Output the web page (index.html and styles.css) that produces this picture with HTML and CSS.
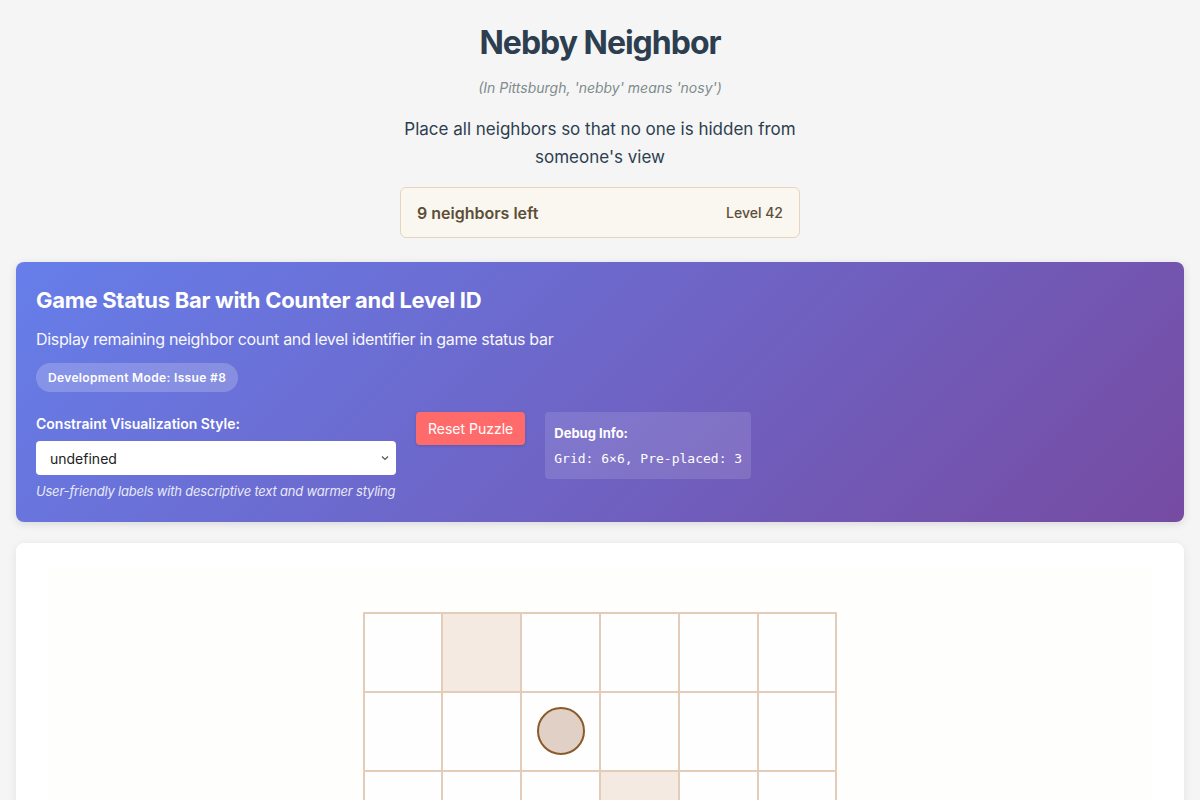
FILE: index.html
```html
<!DOCTYPE html>
<html lang="en">
<head>
<meta charset="utf-8">
<title>Nebby Neighbor</title>
<link rel="stylesheet" href="styles.css">
</head>
<body>
<div class="page">
  <header class="header">
    <h1 class="title">Nebby Neighbor</h1>
    <p class="subtitle">(In Pittsburgh, 'nebby' means 'nosy')</p>
    <p class="intro">Place all neighbors so that no one is hidden from someone's view</p>
    <div class="status">
      <span class="status-count">9 neighbors left</span>
      <span class="status-level">Level 42</span>
    </div>
  </header>

  <section class="dev-panel">
    <h2 class="dev-title">Game Status Bar with Counter and Level ID</h2>
    <p class="dev-desc">Display remaining neighbor count and level identifier in game status bar</p>
    <span class="dev-badge">Development Mode: Issue #8</span>
    <div class="dev-controls">
      <div class="control">
        <label class="control-label">Constraint Visualization Style:</label>
        <div class="select">
          <span>undefined</span>
          <svg class="chev" width="10" height="10" viewBox="0 0 10 10"><path d="M2 3.5 L5 6.5 L8 3.5" fill="none" stroke="#555" stroke-width="1.2"/></svg>
        </div>
        <p class="control-hint">User-friendly labels with descriptive text and warmer styling</p>
      </div>
      <button class="reset">Reset Puzzle</button>
      <div class="debug">
        <div class="debug-title">Debug Info:</div>
        <div class="debug-text">Grid: 6×6, Pre-placed: 3</div>
      </div>
    </div>
  </section>

  <section class="board-card">
    <div class="board-area">
      <div class="grid">
        <div class="cell"></div><div class="cell shaded"></div><div class="cell"></div><div class="cell"></div><div class="cell"></div><div class="cell"></div>
        <div class="cell"></div><div class="cell"></div><div class="cell"><span class="neighbor"></span></div><div class="cell"></div><div class="cell"></div><div class="cell"></div>
        <div class="cell"></div><div class="cell"></div><div class="cell"></div><div class="cell shaded"></div><div class="cell"></div><div class="cell"></div>
        <div class="cell"></div><div class="cell"></div><div class="cell"></div><div class="cell"></div><div class="cell"></div><div class="cell"></div>
        <div class="cell"></div><div class="cell"></div><div class="cell"></div><div class="cell"></div><div class="cell"></div><div class="cell"></div>
        <div class="cell"></div><div class="cell"></div><div class="cell"></div><div class="cell"></div><div class="cell"></div><div class="cell"></div>
      </div>
    </div>
  </section>
</div>
</body>
</html>
```

FILE: styles.css
```css
* { box-sizing: border-box; }

body {
  margin: 0;
  background: #f5f5f5;
  font-family: Inter, "Noto Sans", "Liberation Sans", sans-serif;
  color: #2c3e50;
}

.page {
  padding: 24px 16px 40px;
}

.header {
  display: flex;
  flex-direction: column;
  align-items: center;
  text-align: center;
}

.title {
  margin: 0;
  font-size: 32px;
  line-height: 38px;
  font-weight: 700;
  letter-spacing: -1px;
  color: #2c3e50;
}

.subtitle {
  margin: 17px 0 0;
  font-size: 14px;
  line-height: 18px;
  font-style: italic;
  color: #7f8c8d;
}

.intro {
  margin: 18px 0 0;
  max-width: 400px;
  font-size: 17px;
  line-height: 28px;
  color: #2c3e50;
}

.status {
  margin-top: 16px;
  width: 400px;
  height: 51px;
  display: flex;
  align-items: center;
  justify-content: space-between;
  padding: 0 16px;
  background: #faf6f0;
  border: 1px solid #e6d5bc;
  border-radius: 6px;
  color: #5d4e37;
}

.status-count {
  font-size: 16px;
  font-weight: 600;
}

.status-level {
  font-size: 14px;
  font-weight: 500;
}

.dev-panel {
  margin-top: 24px;
  padding: 24px 20px 23px;
  border-radius: 8px;
  background: linear-gradient(135deg, #667eea 0%, #764ba2 100%);
  color: #fff;
  box-shadow: 0 2px 8px rgba(0,0,0,0.12);
}

.dev-title {
  margin: 0;
  font-size: 22px;
  line-height: 28px;
  font-weight: 700;
  letter-spacing: -0.3px;
}

.dev-desc {
  margin: 15px 0 0;
  font-size: 16px;
  line-height: 20px;
  letter-spacing: -0.33px;
  opacity: 0.95;
}

.dev-badge {
  display: inline-block;
  margin-top: 14px;
  padding: 7px 12px;
  border-radius: 15px;
  background: rgba(255,255,255,0.2);
  font-size: 12px;
  line-height: 15px;
  font-weight: 600;
  letter-spacing: 0.35px;
}

.dev-controls {
  margin-top: 20px;
  display: flex;
  align-items: flex-start;
  gap: 20px;
}

.control {
  width: 360px;
}

.control-label {
  display: block;
  font-size: 14px;
  line-height: 24px;
  font-weight: 600;
}

.select {
  margin-top: 5px;
  height: 34px;
  display: flex;
  align-items: center;
  justify-content: space-between;
  padding: 0 6px 0 14px;
  background: #fff;
  border-radius: 4px;
  color: #222;
  font-size: 14px;
}

.control-hint {
  margin: 8px 0 0;
  font-size: 13px;
  line-height: 16px;
  font-style: italic;
  letter-spacing: -0.2px;
  white-space: nowrap;
  opacity: 0.85;
}

.reset {
  height: 33px;
  padding: 0 12px;
  border: none;
  border-radius: 4px;
  background: #ff6b6b;
  color: #fff;
  font-family: inherit;
  font-size: 14px;
  box-shadow: 0 1px 3px rgba(0,0,0,0.15);
}

.debug {
  padding: 11px 9px 10px;
  border-radius: 4px;
  background: rgba(255,255,255,0.12);
}

.debug-title {
  font-size: 13px;
  line-height: 20px;
  font-weight: 700;
}

.debug-text {
  margin-top: 6px;
  font-family: "DejaVu Sans Mono", "Liberation Mono", monospace;
  font-size: 13px;
  line-height: 20px;
}

.board-card {
  margin-top: 21px;
  padding: 26px 32px;
  background: #fff;
  border-radius: 8px;
  box-shadow: 0 2px 10px rgba(0,0,0,0.08);
}

.board-area {
  display: flex;
  justify-content: center;
  padding: 43px 0 40px;
  background: #fefefd;
}

.grid {
  display: grid;
  grid-template-columns: repeat(6, 76.8px);
  grid-auto-rows: 76.8px;
  gap: 2px;
  padding: 2px;
  background: #e3cdb9;
}

.cell {
  background: #fefefe;
  display: flex;
  align-items: center;
  justify-content: center;
}

.cell.shaded {
  background: #f4eae1;
}

.neighbor {
  width: 48px;
  height: 48px;
  border-radius: 50%;
  background: #e0d0c5;
  border: 2px solid #8b5a2b;
}
```
